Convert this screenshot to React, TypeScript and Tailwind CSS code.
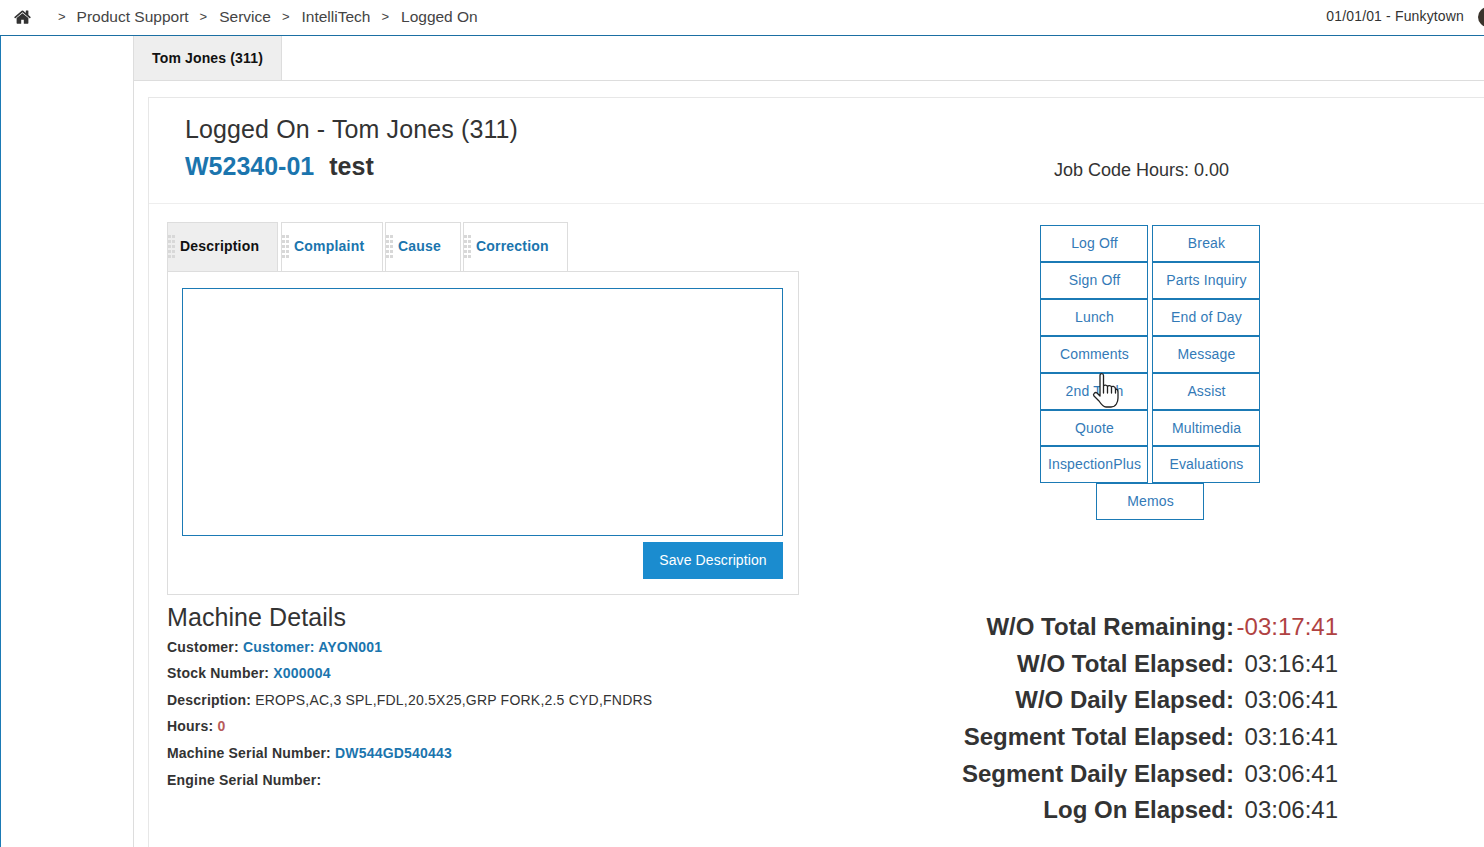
import React from "react";

const crumbs = ["Product Support", "Service", "IntelliTech", "Logged On"];
const tabs = [
  { t: "Description", w: "w-[111px] mr-[1px]", active: true },
  { t: "Complaint", w: "w-[102px]" },
  { t: "Cause", w: "w-[76px]" },
  { t: "Correction", w: "w-[105px]" },
];
const buttons = [
  ["Log Off", "Break"],
  ["Sign Off", "Parts Inquiry"],
  ["Lunch", "End of Day"],
  ["Comments", "Message"],
  ["2nd Tech", "Assist"],
  ["Quote", "Multimedia"],
  ["InspectionPlus", "Evaluations"],
];
const timers = [
  ["W/O Total Remaining:", "-03:17:41", "h-[37px]"],
  ["W/O Total Elapsed:", "03:16:41", "h-[37px]"],
  ["W/O Daily Elapsed:", "03:06:41", "h-[36px]"],
  ["Segment Total Elapsed:", "03:16:41", "h-[37px]"],
  ["Segment Daily Elapsed:", "03:06:41", "h-[37px]"],
  ["Log On Elapsed:", "03:06:41", "h-[36px]"],
];

function Grip() {
  return (
    <span className="grid grid-cols-2 gap-x-px gap-y-[2px] w-[7px] shrink-0">
      {Array.from({ length: 10 }).map((_, i) => (
        <span key={i} className="w-[3px] h-[3px] bg-[#d8d8d8]" />
      ))}
    </span>
  );
}

function Btn({ label, h = "h-[37px]" }: { label: string; h?: string }) {
  return (
    <div className={`w-[108px] ${h} border border-[#1b7ab5] pl-[1px] flex items-center justify-center text-[14px] tracking-[0.15px] text-[#337ab7] bg-white`}>
      {label}
    </div>
  );
}

export default function App() {
  return (
    <div className="w-[1484px] h-[847px] overflow-hidden bg-white text-[#333] flex flex-col relative" style={{ fontFamily: '"Liberation Sans", Arial, sans-serif' }}>
      <header className="h-[36px] shrink-0 border-b border-[#1b6fa3] flex items-center pb-[2px] overflow-hidden">
        <svg viewBox="0 0 1664 1408" className="w-[17px] h-[15px] ml-[14px] fill-[#333]">
          <path d="M1408 864v480q0 26-19 45t-45 19h-384V1024H704v384H320q-26 0-45-19t-19-45V864q0-1 .5-3t.5-3l575-474 575 474q1 2 1 6zm223-69-62 74q-8 9-21 11h-3q-13 0-21-7L832 295 140 873q-12 8-24 7-13-2-21-11l-62-74q-8-10-7-23.5T37 750L756 151q32-26 76-26t76 26l244 204V160q0-14 9-23t23-9h192q14 0 23 9t9 23v408l219 182q10 8 11 21.500t-7 23.500z" />
        </svg>
        <nav className="flex items-center ml-[27px] text-[15.5px] leading-none text-[#444]">
          {crumbs.map((c, i) => (
            <React.Fragment key={c}>
              <span className={`text-[13px] ${i === 0 ? "mr-[11px]" : "ml-[11px] mr-[12px]"}`}>&gt;</span>
              <span>{c}</span>
            </React.Fragment>
          ))}
        </nav>
        <span className="ml-auto text-[14px] text-[#333] tracking-[0.15px]">01/01/01 - Funkytown</span>
        <span className="ml-[14px] mr-[-14px] w-[20px] h-[20px] rounded-full bg-[#3a332c] shrink-0" />
      </header>

      <div className="flex flex-1 min-h-0 border-l border-[#1b7ab5]">
        <aside className="w-[133px] shrink-0 border-r border-[#ddd]" />
        <main className="flex-1 min-w-0 flex flex-col">
          <div className="h-[45px] shrink-0 border-b border-[#ddd] flex">
            <div className="w-[148px] bg-[#eeeeee] border-r border-[#ddd] flex items-center justify-center text-[14px] font-bold tracking-[0.15px] text-[#111]">
              Tom Jones (311)
            </div>
          </div>

          <section className="ml-[14px] mt-[16px] flex-1 border-l border-t border-[#e7e7e7] flex flex-col min-h-0">
            <div className="h-[106px] shrink-0 border-b border-[#eee] pl-[36px] flex">
              <div className="w-[869px] pt-[15px]">
                <h1 className="text-[25px] leading-[32px] font-normal tracking-[0.12px] text-[#333]">Logged On - Tom Jones (311)</h1>
                <div className="mt-[5px] flex text-[25px] leading-[32px] font-bold">
                  <span className="text-[#1b75ae]">W52340-01</span>
                  <span className="ml-[15px] text-[#333]">test</span>
                </div>
              </div>
              <div className="pt-[60px] text-[18px] leading-[24px] text-[#333]">Job Code Hours: 0.00</div>
            </div>

            <div className="flex flex-1 min-h-0 pl-[18px] pt-[18px]">
              <div className="w-[632px] shrink-0">
                <div className="flex gap-[2px] h-[49px]">
                  {tabs.map((tab) => (
                    <div
                      key={tab.t}
                      className={`${tab.w} h-[49px] pb-[2px] border border-[#ddd] border-b-0 flex items-center gap-[5px] text-[14px] font-bold tracking-[0.2px] ${tab.active ? "bg-[#eeeeee] text-[#111]" : "bg-white text-[#1b75ae]"}`}
                    >
                      <Grip />
                      <span>{tab.t}</span>
                    </div>
                  ))}
                </div>
                <div className="h-[324px] border border-[#ddd] pl-[14px] pr-[15px] pt-[16px] flex flex-col">
                  <div className="h-[248px] border border-[#1b7ab5]" />
                  <div className="mt-[6px] flex justify-end">
                    <div className="w-[140px] h-[37px] bg-[#1b8ccf] text-white text-[14px] tracking-[0.1px] flex items-center justify-center">Save Description</div>
                  </div>
                </div>
                <h2 className="mt-[6px] mb-[0.7px] text-[25px] leading-[32px] tracking-[0.08px] font-normal text-[#333]">Machine Details</h2>
                <dl className="text-[14px] leading-[26.6px] tracking-[0.2px]">
                  <div><b>Customer:</b> <b className="text-[#1b75ae]">Customer: AYON001</b></div>
                  <div><b>Stock Number:</b> <b className="text-[#1b75ae]">X000004</b></div>
                  <div><b>Description:</b> <span className="tracking-[0.22px]">EROPS,AC,3 SPL,FDL,20.5X25,GRP FORK,2.5 CYD,FNDRS</span></div>
                  <div><b>Hours:</b> <b className="text-[#b85c5c]">0</b></div>
                  <div><b>Machine Serial Number:</b> <b className="text-[#1b75ae]">DW544GD540443</b></div>
                  <div><b>Engine Serial Number:</b></div>
                </dl>
              </div>

              <div className="w-[539px] shrink-0 flex flex-col">
                <div className="ml-[241px] mt-[3px] w-[220px] flex flex-col items-center">
                  {buttons.map(([a, b], i) => (
                    <div key={a} className="flex gap-[4px]">
                      <Btn label={a} h={i === 5 ? "h-[36px]" : "h-[37px]"} />
                      <Btn label={b} h={i === 5 ? "h-[36px]" : "h-[37px]"} />
                    </div>
                  ))}
                  <Btn label="Memos" />
                </div>
                <div className="mt-[88px] flex flex-col">
                  {timers.map(([k, v, h], i) => (
                    <div key={k} className={`${h} flex items-center justify-end text-[24px]`}>
                      <b className="text-[#333]">{k}</b>
                      <span className={`w-[104px] text-right ${i === 0 ? "text-[#b04242]" : "text-[#333]"}`}>{v}</span>
                    </div>
                  ))}
                </div>
              </div>
            </div>
          </section>
        </main>
      </div>

      <svg viewBox="0 0 30 38" className="absolute left-[1090px] top-[372px] w-[30px] h-[38px]" fill="#fff" stroke="#222" strokeWidth="1.3" strokeLinejoin="round" strokeLinecap="round">
        <path d="M10 3.500c0-2.500 3.500-2.500 3.500 0v11c0-2 4-2 4 .5c0-2 4-2 4 .5c0-2 4-1.500 4 1.500c2 0 2.500 1 2.500 3v6c0 4-2 9-7 9h-5c-3 0-5-3-7-6l-5-5c-1.500-1.500 1-4.500 3-3l3 3z" />
        <path d="M13.500 15v6M17.500 15.500v5.500M21.500 16v5M25.500 17.500v3.500" fill="none" />
      </svg>
    </div>
  );
}
